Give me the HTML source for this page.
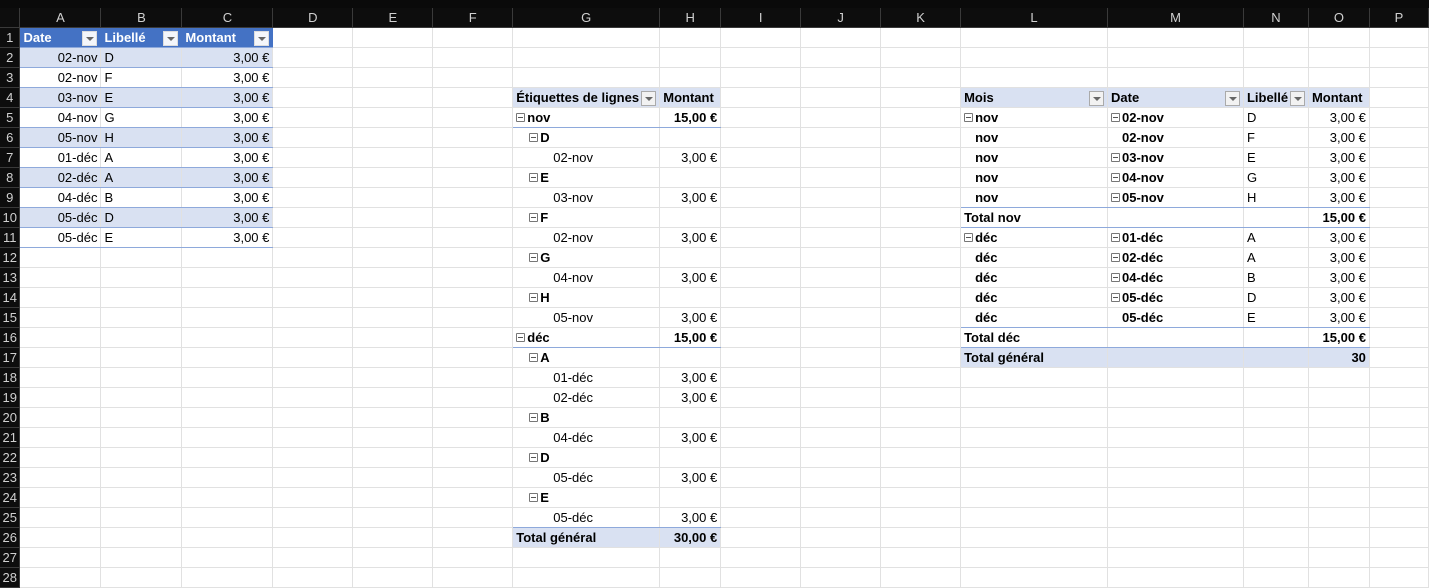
<!DOCTYPE html><html><head><meta charset="utf-8"><style>
body{margin:0;background:#fff;width:1429px;height:578px;overflow:hidden;font-family:"Liberation Sans",sans-serif;font-size:13px;color:#000}
.top{position:absolute;left:0;top:0;width:1429px;height:8px;background:#0a0a0a}
table{position:absolute;left:0;top:8px;border-collapse:collapse;table-layout:fixed}
td{height:19px;padding:0 3px;border-right:1px solid #e1e1e1;border-bottom:1px solid #e1e1e1;white-space:nowrap;overflow:hidden;line-height:19px}
tr.h td{background:#0d0d0d;color:#d0d0d0;text-align:center;border-color:#3a3a3a}
td.rh{background:#0d0d0d;color:#d0d0d0;border-color:#3a3a3a;padding:0;text-align:center;font-size:13px}
.r{text-align:right}.b{font-weight:bold}
.hd{background:#4472c4;color:#fff;font-weight:bold;border-bottom:1px solid #8ea9db;border-right-color:#4472c4}
.bd{background:#d9e1f2}
.t{border-bottom-color:#8ea9db!important}
.ph{background:#d9e1f2;font-weight:bold}
.bl{border-bottom:1px solid #8ea9db!important}
.dd{float:right;width:13px;height:13px;margin-top:3px;background:#f2f2f2;border:1px solid #aaa;position:relative}
.dd:after{content:"";position:absolute;left:3px;top:5px;border-left:4px solid transparent;border-right:4px solid transparent;border-top:4px solid #666}
.hd .dd{background:#f4f6fb;border-color:#ddd}
i.c{display:inline-block;width:7px;height:7px;border:1px solid #777;border-radius:1px;position:relative;margin-right:2px;vertical-align:0px}
i.c:after{content:"";position:absolute;left:1px;top:3px;width:5px;height:1px;background:#555}
.p1{padding-left:16px}.p2{padding-left:40px}.p3{padding-left:14px}
</style></head><body><div class="top"></div>
<table>
<colgroup><col style="width:20px"><col style="width:81px"><col style="width:81px"><col style="width:91px"><col style="width:80px"><col style="width:80px"><col style="width:80px"><col style="width:147px"><col style="width:61px"><col style="width:80px"><col style="width:80px"><col style="width:80px"><col style="width:147px"><col style="width:136px"><col style="width:65px"><col style="width:61px"><col style="width:59px"></colgroup>
<tr class="h"><td></td><td>A</td><td>B</td><td>C</td><td>D</td><td>E</td><td>F</td><td>G</td><td>H</td><td>I</td><td>J</td><td>K</td><td>L</td><td>M</td><td>N</td><td>O</td><td>P</td></tr>
<tr><td class="rh">1</td><td class="hd">Date<span class="dd"></span></td><td class="hd">Libellé<span class="dd"></span></td><td class="hd">Montant<span class="dd"></span></td><td></td><td></td><td></td><td></td><td></td><td></td><td></td><td></td><td></td><td></td><td></td><td></td><td></td></tr>
<tr><td class="rh">2</td><td class="bd r t">02-nov</td><td class="bd t">D</td><td class="bd r t">3,00 €</td><td></td><td></td><td></td><td></td><td></td><td></td><td></td><td></td><td></td><td></td><td></td><td></td><td></td></tr>
<tr><td class="rh">3</td><td class="r t">02-nov</td><td class="t">F</td><td class="r t">3,00 €</td><td></td><td></td><td></td><td></td><td></td><td></td><td></td><td></td><td></td><td></td><td></td><td></td><td></td></tr>
<tr><td class="rh">4</td><td class="bd r t">03-nov</td><td class="bd t">E</td><td class="bd r t">3,00 €</td><td></td><td></td><td></td><td class="ph">Étiquettes de lignes<span class="dd"></span></td><td class="ph">Montant</td><td></td><td></td><td></td><td class="ph">Mois<span class="dd"></span></td><td class="ph">Date<span class="dd"></span></td><td class="ph">Libellé<span class="dd"></span></td><td class="ph">Montant</td><td></td></tr>
<tr><td class="rh">5</td><td class="r t">04-nov</td><td class="t">G</td><td class="r t">3,00 €</td><td></td><td></td><td></td><td class="b bl"><i class="c"></i>nov</td><td class="b r bl">15,00 €</td><td></td><td></td><td></td><td class="b"><i class="c"></i>nov</td><td class="b"><i class="c"></i>02-nov</td><td>D</td><td class="r">3,00 €</td><td></td></tr>
<tr><td class="rh">6</td><td class="bd r t">05-nov</td><td class="bd t">H</td><td class="bd r t">3,00 €</td><td></td><td></td><td></td><td class="b p1"><i class="c"></i>D</td><td></td><td></td><td></td><td></td><td class="b p3">nov</td><td class="b p3">02-nov</td><td>F</td><td class="r">3,00 €</td><td></td></tr>
<tr><td class="rh">7</td><td class="r t">01-déc</td><td class="t">A</td><td class="r t">3,00 €</td><td></td><td></td><td></td><td class="p2">02-nov</td><td class="r">3,00 €</td><td></td><td></td><td></td><td class="b p3">nov</td><td class="b"><i class="c"></i>03-nov</td><td>E</td><td class="r">3,00 €</td><td></td></tr>
<tr><td class="rh">8</td><td class="bd r t">02-déc</td><td class="bd t">A</td><td class="bd r t">3,00 €</td><td></td><td></td><td></td><td class="b p1"><i class="c"></i>E</td><td></td><td></td><td></td><td></td><td class="b p3">nov</td><td class="b"><i class="c"></i>04-nov</td><td>G</td><td class="r">3,00 €</td><td></td></tr>
<tr><td class="rh">9</td><td class="r t">04-déc</td><td class="t">B</td><td class="r t">3,00 €</td><td></td><td></td><td></td><td class="p2">03-nov</td><td class="r">3,00 €</td><td></td><td></td><td></td><td class="b p3 bl">nov</td><td class="b bl"><i class="c"></i>05-nov</td><td class="bl">H</td><td class="r bl">3,00 €</td><td></td></tr>
<tr><td class="rh">10</td><td class="bd r t">05-déc</td><td class="bd t">D</td><td class="bd r t">3,00 €</td><td></td><td></td><td></td><td class="b p1"><i class="c"></i>F</td><td></td><td></td><td></td><td></td><td class="b bl">Total nov</td><td class="bl"></td><td class="bl"></td><td class="b r bl">15,00 €</td><td></td></tr>
<tr><td class="rh">11</td><td class="r t">05-déc</td><td class="t">E</td><td class="r t">3,00 €</td><td></td><td></td><td></td><td class="p2">02-nov</td><td class="r">3,00 €</td><td></td><td></td><td></td><td class="b"><i class="c"></i>déc</td><td class="b"><i class="c"></i>01-déc</td><td>A</td><td class="r">3,00 €</td><td></td></tr>
<tr><td class="rh">12</td><td></td><td></td><td></td><td></td><td></td><td></td><td class="b p1"><i class="c"></i>G</td><td></td><td></td><td></td><td></td><td class="b p3">déc</td><td class="b"><i class="c"></i>02-déc</td><td>A</td><td class="r">3,00 €</td><td></td></tr>
<tr><td class="rh">13</td><td></td><td></td><td></td><td></td><td></td><td></td><td class="p2">04-nov</td><td class="r">3,00 €</td><td></td><td></td><td></td><td class="b p3">déc</td><td class="b"><i class="c"></i>04-déc</td><td>B</td><td class="r">3,00 €</td><td></td></tr>
<tr><td class="rh">14</td><td></td><td></td><td></td><td></td><td></td><td></td><td class="b p1"><i class="c"></i>H</td><td></td><td></td><td></td><td></td><td class="b p3">déc</td><td class="b"><i class="c"></i>05-déc</td><td>D</td><td class="r">3,00 €</td><td></td></tr>
<tr><td class="rh">15</td><td></td><td></td><td></td><td></td><td></td><td></td><td class="p2">05-nov</td><td class="r">3,00 €</td><td></td><td></td><td></td><td class="b p3 bl">déc</td><td class="b p3 bl">05-déc</td><td class="bl">E</td><td class="r bl">3,00 €</td><td></td></tr>
<tr><td class="rh">16</td><td></td><td></td><td></td><td></td><td></td><td></td><td class="b bl"><i class="c"></i>déc</td><td class="b r bl">15,00 €</td><td></td><td></td><td></td><td class="b bl">Total déc</td><td class="bl"></td><td class="bl"></td><td class="b r bl">15,00 €</td><td></td></tr>
<tr><td class="rh">17</td><td></td><td></td><td></td><td></td><td></td><td></td><td class="b p1"><i class="c"></i>A</td><td></td><td></td><td></td><td></td><td class="ph">Total général</td><td class="ph"></td><td class="ph"></td><td class="ph r">30</td><td></td></tr>
<tr><td class="rh">18</td><td></td><td></td><td></td><td></td><td></td><td></td><td class="p2">01-déc</td><td class="r">3,00 €</td><td></td><td></td><td></td><td></td><td></td><td></td><td></td><td></td></tr>
<tr><td class="rh">19</td><td></td><td></td><td></td><td></td><td></td><td></td><td class="p2">02-déc</td><td class="r">3,00 €</td><td></td><td></td><td></td><td></td><td></td><td></td><td></td><td></td></tr>
<tr><td class="rh">20</td><td></td><td></td><td></td><td></td><td></td><td></td><td class="b p1"><i class="c"></i>B</td><td></td><td></td><td></td><td></td><td></td><td></td><td></td><td></td><td></td></tr>
<tr><td class="rh">21</td><td></td><td></td><td></td><td></td><td></td><td></td><td class="p2">04-déc</td><td class="r">3,00 €</td><td></td><td></td><td></td><td></td><td></td><td></td><td></td><td></td></tr>
<tr><td class="rh">22</td><td></td><td></td><td></td><td></td><td></td><td></td><td class="b p1"><i class="c"></i>D</td><td></td><td></td><td></td><td></td><td></td><td></td><td></td><td></td><td></td></tr>
<tr><td class="rh">23</td><td></td><td></td><td></td><td></td><td></td><td></td><td class="p2">05-déc</td><td class="r">3,00 €</td><td></td><td></td><td></td><td></td><td></td><td></td><td></td><td></td></tr>
<tr><td class="rh">24</td><td></td><td></td><td></td><td></td><td></td><td></td><td class="b p1"><i class="c"></i>E</td><td></td><td></td><td></td><td></td><td></td><td></td><td></td><td></td><td></td></tr>
<tr><td class="rh">25</td><td></td><td></td><td></td><td></td><td></td><td></td><td class="p2 bl">05-déc</td><td class="r bl">3,00 €</td><td></td><td></td><td></td><td></td><td></td><td></td><td></td><td></td></tr>
<tr><td class="rh">26</td><td></td><td></td><td></td><td></td><td></td><td></td><td class="ph">Total général</td><td class="ph r">30,00 €</td><td></td><td></td><td></td><td></td><td></td><td></td><td></td><td></td></tr>
<tr><td class="rh">27</td><td></td><td></td><td></td><td></td><td></td><td></td><td></td><td></td><td></td><td></td><td></td><td></td><td></td><td></td><td></td><td></td></tr>
<tr><td class="rh">28</td><td></td><td></td><td></td><td></td><td></td><td></td><td></td><td></td><td></td><td></td><td></td><td></td><td></td><td></td><td></td><td></td></tr>
</table></body></html>
